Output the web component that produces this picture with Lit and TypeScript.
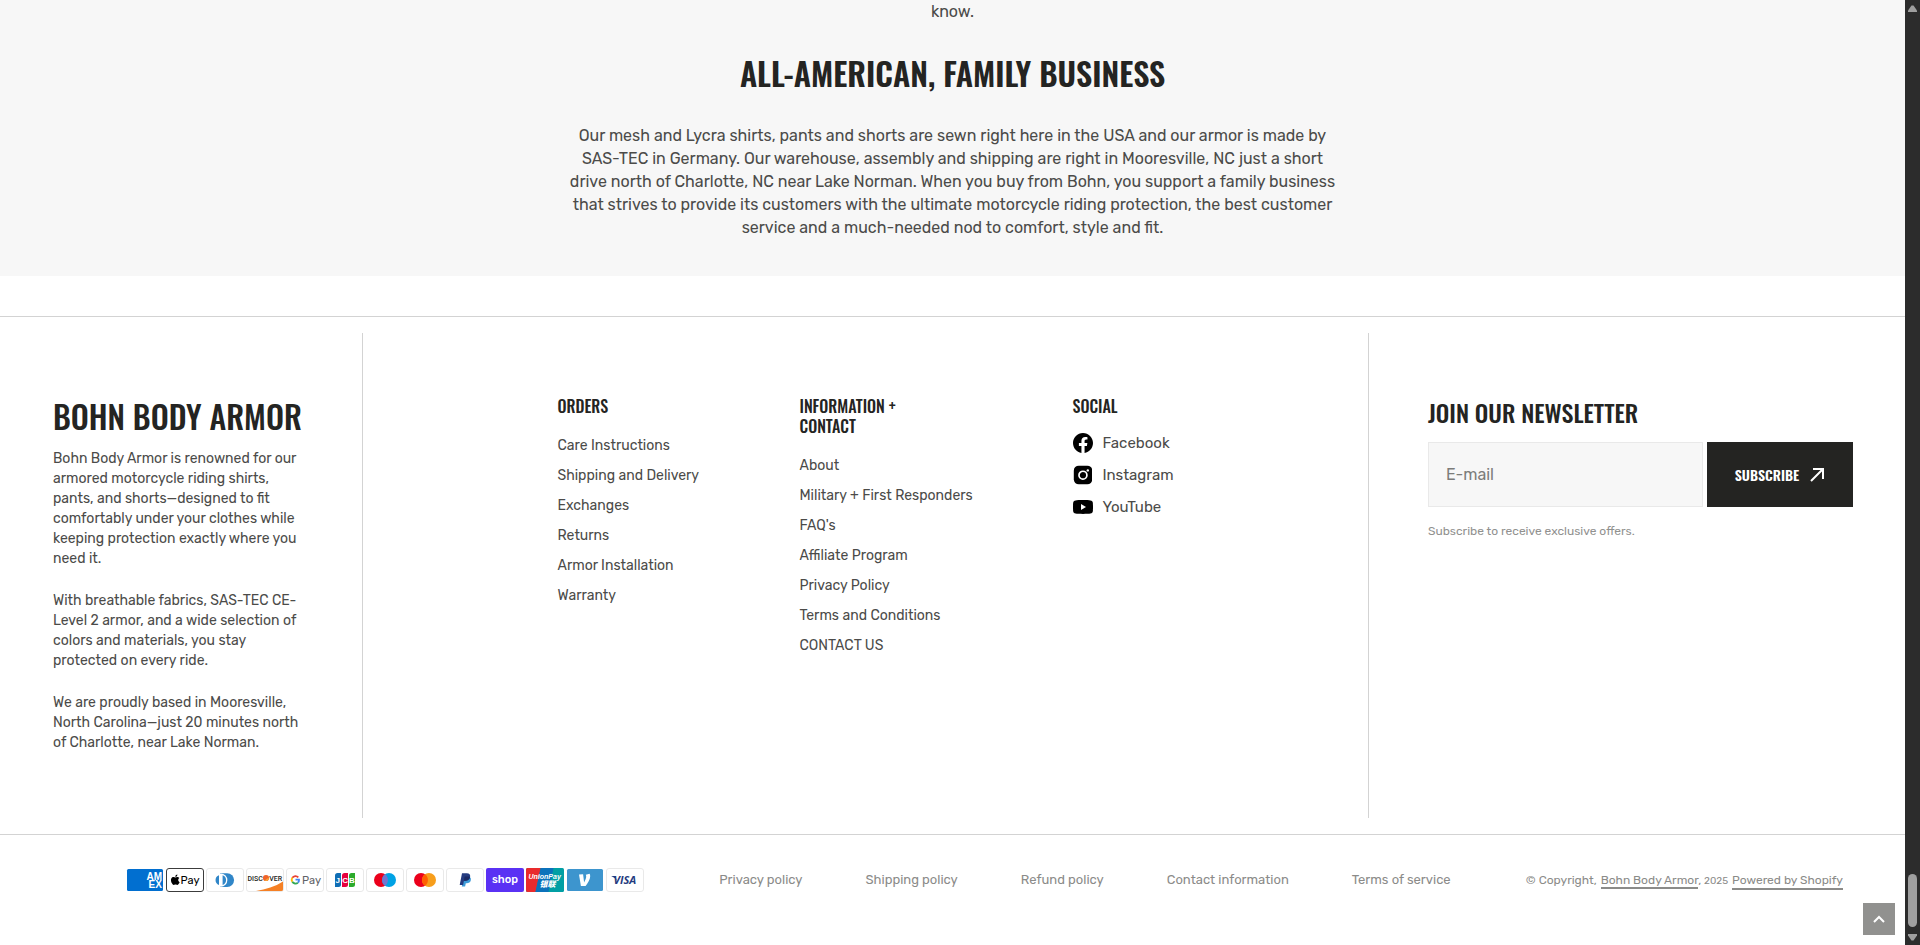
import { LitElement, html, svg, css } from "lit";
import { customElement } from "lit/decorators.js";

type LinkGroup = { title: string; links: string[] };

const groups: LinkGroup[] = [
  {
    title: "Orders",
    links: ["Care Instructions", "Shipping and Delivery", "Exchanges", "Returns", "Armor Installation", "Warranty"],
  },
  {
    title: "Information + Contact",
    links: [
      "About",
      "Military + First Responders",
      "FAQ's",
      "Affiliate Program",
      "Privacy Policy",
      "Terms and Conditions",
      "CONTACT US",
    ],
  },
];

const about = [
  "Bohn Body Armor is renowned for our armored motorcycle riding shirts, pants, and shorts—designed to fit comfortably under your clothes while keeping protection exactly where you need it.",
  "With breathable fabrics, SAS-TEC CE-Level 2 armor, and a wide selection of colors and materials, you stay protected on every ride.",
  "We are proudly based in Mooresville, North Carolina—just 20 minutes north of Charlotte, near Lake Norman.",
];

const social = [
  {
    name: "Facebook",
    icon: svg`<path d="M20 10.06C20 4.5 15.52 0 10 0S0 4.5 0 10.06C0 15.08 3.66 19.24 8.44 20v-7.03H5.9v-2.91h2.54V7.85c0-2.52 1.49-3.91 3.78-3.91 1.09 0 2.24.2 2.24.2v2.47h-1.26c-1.24 0-1.63.78-1.63 1.57v1.88h2.78l-.45 2.91h-2.33V20C16.34 19.24 20 15.08 20 10.06z"/>`,
  },
  {
    name: "Instagram",
    icon: svg`<rect x=".8" y=".6" width="18.6" height="18.8" rx="5"/><circle cx="10" cy="10.2" r="4" fill="none" stroke="#fff" stroke-width="1.7"/><circle cx="14.9" cy="5.4" r="1.2" fill="#fff"/>`,
  },
  {
    name: "YouTube",
    icon: svg`<path d="M2.6 3.4C5 3 15 3 17.4 3.4c1.6.3 2.3 1.1 2.45 2.5.2 2.7.2 5.5 0 8.2-.15 1.4-.85 2.2-2.45 2.5-2.4.4-12.4.4-14.8 0C1 16.3.3 15.5.15 14.1c-.2-2.7-.2-5.5 0-8.2C.3 4.5 1 3.7 2.6 3.4z"/><path d="M8 7.1v5.8l5-2.9z" fill="#fff"/>`,
  },
];

const frame = svg`<rect x=".5" y=".5" width="37" height="23" rx="2.5" fill="#fff" stroke="#e9e9e9"/>`;

const payments = [
  {
    name: "American Express",
    art: svg`<rect x="1" y="1" width="36" height="22" rx="1.5" fill="#016fd0"/>
      <text x="20.5" y="11.5" class="amex">AM</text><text x="22.5" y="20" class="amex">EX</text>`,
  },
  {
    name: "Apple Pay",
    art: svg`<rect x=".5" y=".5" width="37" height="23" rx="2.5" fill="#fff" stroke="#3c3c3c"/>
      <path d="M11.3 8.3c-.5.6-1.3 1-2 .9-.1-.8.3-1.6.7-2.1.5-.6 1.3-1 2-1 .05.8-.25 1.6-.7 2.2zm.7 1c-1.1-.05-2 .65-2.6.65-.5 0-1.3-.6-2.2-.6-1.1 0-2.2.65-2.7 1.7-1.2 2-.3 5 .85 6.6.55.8 1.2 1.7 2.1 1.65.85-.05 1.15-.55 2.2-.55 1 0 1.3.55 2.2.5.9 0 1.45-.8 2-1.6.65-.9.9-1.8.9-1.85-.05 0-1.75-.65-1.75-2.6 0-1.65 1.35-2.4 1.4-2.5-.75-1.15-1.95-1.3-2.4-1.4z" fill="#000" transform="translate(1.8 1.5) scale(.8)"/>
      <text x="14.5" y="16" class="pay ink">Pay</text>`,
  },
  {
    name: "Diners Club",
    art: svg`${frame}<path d="M14 5.2h7.2a6.9 6.9 0 0 1 0 13.8H14z" fill="#3086c8"/><circle cx="14.8" cy="12.1" r="6.6" fill="#fff"/><path d="M13 7.2v9.800a5.200 5.200 0 0 1 0-9.800zM16.600 7.200a5.200 5.200 0 0 1 0 9.800z" fill="#3086c8"/>`,
  },
  {
    name: "Discover",
    art: svg`${frame}<path d="M37 13.5v8a1.500 1.500 0 0 1-1.500 1.500H10c10-1.500 19-4.500 27-9.500z" fill="#f58025"/>
      <text x="1.5" y="12.6" class="disc">DISC</text><circle cx="20" cy="10" r="3.1" fill="#f0642a"/><path d="M18.500 12.600a3 3 0 0 0 4.400-3z" fill="#f9a533"/><text x="23.2" y="12.6" class="disc">VER</text>`,
  },
  {
    name: "Google Pay",
    art: svg`${frame}<g fill="none" stroke-width="1.8"><path d="M12.3 9.300A3.800 3.800 0 0 0 6.300 9.800" stroke="#ea4335"/><path d="M6.300 9.800a3.800 3.800 0 0 0 0 4" stroke="#fbbc04"/><path d="M6.300 13.800a3.800 3.800 0 0 0 5.600.9" stroke="#34a853"/><path d="M11.900 14.700a3.800 3.800 0 0 0 1.100-3H9.500" stroke="#4285f4"/></g>
      <text x="16" y="16" class="pay grey">Pay</text>`,
  },
  {
    name: "JCB",
    art: svg`${frame}<path d="M9 7.5a2.500 2.500 0 0 1 2.500-2.500H15v11.500a2.500 2.500 0 0 1-2.500 2.500H9z" fill="#0f6eb5"/><path d="M16 7.500a2.500 2.500 0 0 1 2.500-2.500H22v11.500a2.500 2.500 0 0 1-2.500 2.500H16z" fill="#e6003e"/><path d="M23 7.500a2.500 2.500 0 0 1 2.500-2.500H29v11.500a2.500 2.500 0 0 1-2.500 2.500H23z" fill="#2bab2b"/>
      <text x="9.6" y="15" class="jcb">J</text><text x="16.2" y="15" class="jcb">C</text><text x="22.9" y="15" class="jcb">B</text>`,
  },
  {
    name: "Maestro",
    art: svg`${frame}<circle cx="15" cy="12" r="7" fill="#eb001b"/><circle cx="23" cy="12" r="7" fill="#00a2e5"/><path d="M19 6.3a7 7 0 0 1 0 11.4 7 7 0 0 1 0-11.4z" fill="#7375cf"/>`,
  },
  {
    name: "Mastercard",
    art: svg`${frame}<circle cx="15" cy="12" r="7" fill="#eb001b"/><circle cx="23" cy="12" r="7" fill="#f79e1b"/><path d="M19 6.3a7 7 0 0 1 0 11.4 7 7 0 0 1 0-11.4z" fill="#ff5f00"/>`,
  },
  {
    name: "PayPal",
    art: svg`${frame}<path d="M17.5 8.5H22c2.5.3 3.3 1.7 2.8 3.8-.5 2.2-2 3-4 3h-1l-.7 3.200h-3.300z" fill="#3d9bd8"/><path d="M16 5.200h4.800c2.600 0 3.800 1.400 3.300 3.800-.5 2.700-2.200 3.700-4.700 3.700h-1.500l-.8 4.200h-3.400z" fill="#253b80"/><path d="M17.900 12.700l.5-3.200c.1-.7.5-.9 1-.9h2.900c.7 0 1.200.1 1.700.4-.5 2.700-2.100 3.700-4.600 3.700z" fill="#1b2a63"/>`,
  },
  {
    name: "Shop Pay",
    art: svg`<rect width="38" height="24" rx="2" fill="#5a31f4"/><text x="6" y="15" class="shop">shop</text>`,
  },
  {
    name: "Union Pay",
    art: svg`<rect width="38" height="24" rx="1.5" fill="#019fa4"/><path d="M1.500 0H15L9.500 24h-8A1.500 1.500 0 0 1 0 22.500v-21A1.500 1.500 0 0 1 1.500 0z" fill="#e92a2d"/><path d="M14.500 0h13l-5 24h-13z" fill="#0b72bb"/>
      <text x="2.5" y="11" class="union">UnionPay</text><text x="13.5" y="19" class="cjk">银联</text>`,
  },
  {
    name: "Venmo",
    art: svg`<rect x="1" y="1" width="36" height="22" rx="1.5" fill="#3d95ce"/><path d="M23.600 5.800c.4.7.6 1.400.6 2.400 0 3-2.500 7-4.600 9.700h-4.700L13 6.600l4.100-.4 1 8.200c.9-1.500 2.100-4 2.100-5.600 0-.9-.2-1.600-.4-2z" fill="#fff"/>`,
  },
  {
    name: "Visa",
    art: svg`${frame}<text x="7.500" y="16" class="visa">VISA</text><path d="M5.500 7.900h3.800l1.700 5C9.500 10.500 7.500 8.900 5.500 8.300z" fill="#253b80"/>`,
  },
];

const policies = ["Privacy policy", "Shipping policy", "Refund policy", "Contact information", "Terms of service"];

@customElement("app-root")
export class AppRoot extends LitElement {
  static styles = css`
    :host {
      display: grid;
      grid-template-columns: minmax(0, 1fr) 15px;
      min-height: 100vh;
      box-sizing: border-box;
      font-family: Rubik, Roboto, sans-serif;
      font-size: 14px;
      line-height: 20px;
      color: #4b4b49;
      background: #fff;
    }
    * {
      box-sizing: border-box;
    }
    h2, h3, p, ul {
      margin: 0;
      padding: 0;
    }
    ul {
      list-style: none;
    }
    h2, h3 {
      font-family: Oswald, "Open Sans Condensed", sans-serif;
      font-weight: 500;
      text-transform: uppercase;
      color: #242422;
    }
    a {
      color: inherit;
      text-decoration: none;
    }
    .story {
      background: #f7f7f7;
      padding: 0 24px 37px;
      text-align: center;
      font-size: 16px;
      line-height: 23px;
    }
    .story p {
      max-width: 780px;
      margin: 0 auto;
    }
    .story h2 {
      font-size: 32px;
      line-height: 40px;
      font-weight: 600;
      margin: 30px 0 31px;
    }
    footer {
      margin-top: 40px;
      border-top: 1px solid #d3d3d3;
    }
    .top {
      display: grid;
      grid-template-columns: 362fr 1007fr 536fr;
      padding: 16px 0;
      min-height: 518px;
      border-bottom: 1px solid #d3d3d3;
    }
    .brand {
      padding: 63px 58px 63px 53px;
    }
    .brand h2 {
      font-size: 32px;
      line-height: 40px;
      margin-bottom: 13px;
      white-space: nowrap;
    }
    .brand p + p {
      margin-top: 22px;
    }
    .menus {
      display: grid;
      grid-template-columns: 142px 173px 101px;
      gap: 100px;
      justify-content: center;
      padding: 63px 0;
      border: solid #d3d3d3;
      border-width: 0 1px;
    }
    .menus h3 {
      font-size: 16px;
      line-height: 20px;
      margin-bottom: 20px;
      max-width: 130px;
    }
    .menus li {
      white-space: nowrap;
    }
    .menus li + li {
      margin-top: 10px;
    }
    .menus .social h3 {
      margin-bottom: 17px;
    }
    .social a {
      display: flex;
      align-items: center;
      gap: 10px;
      font-size: 15px;
    }
    .menus .social li + li {
      margin-top: 12px;
    }
    .social svg {
      width: 20px;
      height: 20px;
      fill: #000;
    }
    .news {
      padding: 63px 52px 63px 59px;
    }
    .news h2 {
      font-size: 24px;
      line-height: 32px;
      margin-bottom: 14px;
    }
    .form {
      display: flex;
      gap: 4px;
    }
    .form input {
      flex: 1;
      min-width: 0;
      height: 65px;
      padding: 0 17px;
      border: 1px solid #e9e9e9;
      border-radius: 0;
      background: #f7f7f7;
      font: 400 16px Rubik, sans-serif;
      color: #242422;
    }
    .form input::placeholder {
      color: #7c7c7a;
      opacity: 1;
    }
    .form button {
      display: flex;
      align-items: center;
      justify-content: center;
      gap: 10px;
      width: 146px;
      height: 65px;
      border: 0;
      background: #242422;
      color: #fff;
      font: 600 14px Oswald, "Open Sans Condensed", sans-serif;
      text-transform: uppercase;
    }
    .form button svg {
      width: 16px;
      height: 16px;
    }
    .hint {
      margin-top: 14px;
      font-size: 12px;
      color: #91918f;
    }
    .bottom {
      display: flex;
      align-items: center;
      justify-content: space-between;
      padding: 33px 62px 53px 126px;
      font-size: 13px;
      color: #8b8b89;
    }
    .pays {
      display: flex;
      gap: 2px;
    }
    .pays svg {
      display: block;
      width: 38px;
      height: 24px;
    }
    .policies {
      display: flex;
      gap: 63px;
    }
    .legal {
      display: flex;
      gap: 4px;
      align-items: baseline;
      font-size: 12px;
    }
    .legal small {
      font-size: 10px;
    }
    .legal a {
      border-bottom: 2px solid currentColor;
      line-height: 15px;
    }
    .totop {
      position: fixed;
      right: 25px;
      bottom: 10px;
      display: grid;
      place-items: center;
      width: 32px;
      height: 32px;
      padding: 0;
      border: 0;
      background: #91918f;
    }
    .totop svg {
      width: 12px;
      height: 8px;
    }
    .bar {
      display: flex;
      flex-direction: column;
      align-items: center;
      justify-content: space-between;
      padding: 5px 0 4px;
      background: #2c2c2c;
    }
    .bar svg {
      width: 9px;
      height: 7px;
      fill: #9f9f9f;
    }
    .low {
      display: grid;
      justify-items: center;
      gap: 7px;
    }
    .thumb {
      width: 9px;
      height: 53px;
      border-radius: 5px;
      background: #9f9f9f;
    }
    .amex {
      font: 700 10px "Liberation Sans", sans-serif;
      fill: #fff;
    }
    .pay {
      font: 400 11px Rubik, sans-serif;
    }
    .ink {
      fill: #000;
    }
    .grey {
      fill: #5f6368;
    }
    .disc {
      font: 500 7px Roboto, sans-serif;
      fill: #231f20;
    }
    .jcb {
      font: 700 8px "Liberation Sans", sans-serif;
      fill: #fff;
    }
    .shop {
      font: 500 11px Rubik, sans-serif;
      fill: #fff;
    }
    .union {
      font: italic 700 7px "Liberation Sans", sans-serif;
      fill: #fff;
    }
    .cjk {
      font: italic 900 8px "Noto Sans CJK SC", sans-serif;
      fill: #fff;
    }
    .visa {
      font: italic 700 11px "Open Sans", sans-serif;
      fill: #253b80;
    }
  `;

  render() {
    return html`
      <div class="page">
        <section class="story">
          <p>know.</p>
          <h2>All-American, Family Business</h2>
          <p>
            Our mesh and Lycra shirts, pants and shorts are sewn right here in the USA and our armor is made by SAS-TEC
            in Germany. Our warehouse, assembly and shipping are right in Mooresville, NC just a short drive north of
            Charlotte, NC near Lake Norman. When you buy from Bohn, you support a family business that strives to
            provide its customers with the ultimate motorcycle riding protection, the best customer service and a
            much-needed nod to comfort, style and fit.
          </p>
        </section>
        <footer>
          <div class="top">
            <div class="brand">
              <h2>Bohn Body Armor</h2>
              ${about.map((text) => html`<p>${text}</p>`)}
            </div>
            <div class="menus">
              ${groups.map(
                (group) => html`<nav aria-label=${group.title}>
                  <h3>${group.title}</h3>
                  <ul>
                    ${group.links.map((link) => html`<li><a href="#">${link}</a></li>`)}
                  </ul>
                </nav>`
              )}
              <nav class="social" aria-label="Social">
                <h3>Social</h3>
                <ul>
                  ${social.map(
                    (item) => html`<li>
                      <a href="#"><svg viewBox="0 0 20 20" aria-hidden="true">${item.icon}</svg>${item.name}</a>
                    </li>`
                  )}
                </ul>
              </nav>
            </div>
            <div class="news">
              <h2>Join our newsletter</h2>
              <form class="form" @submit=${(e: Event) => e.preventDefault()}>
                <input type="email" placeholder="E-mail" aria-label="E-mail" />
                <button type="submit">
                  Subscribe
                  <svg viewBox="0 0 16 16" fill="none" stroke="#fff" stroke-width="2" aria-hidden="true">
                    <path d="M2 14 13.5 2.5M4 2h10v10" />
                  </svg>
                </button>
              </form>
              <p class="hint">Subscribe to receive exclusive offers.</p>
            </div>
          </div>
          <div class="bottom">
            <ul class="pays">
              ${payments.map(
                (pay) => html`<li><svg viewBox="0 0 38 24" role="img" aria-label=${pay.name}>${pay.art}</svg></li>`
              )}
            </ul>
            <ul class="policies">
              ${policies.map((name) => html`<li><a href="#">${name}</a></li>`)}
            </ul>
            <div class="legal">
              <span>© Copyright,</span>
              <span><a href="#">Bohn Body Armor</a>, <small>2025</small></span>
              <a href="#">Powered by Shopify</a>
            </div>
          </div>
        </footer>
      </div>
      <div class="bar" aria-hidden="true">
        <svg viewBox="0 0 9 7"><path d="M3.5.5h2L9 5.500V7H0V5.500z" /></svg>
        <div class="low">
          <div class="thumb"></div>
          <svg viewBox="0 0 9 7"><path d="M0 0h9v1.500L5.500 6.500h-2L0 1.500z" /></svg>
        </div>
      </div>
      <button class="totop" aria-label="Back to top">
        <svg viewBox="0 0 12 8" fill="none" stroke="#fff" stroke-width="2"><path d="M1 7l5-5 5 5" /></svg>
      </button>
    `;
  }
}
